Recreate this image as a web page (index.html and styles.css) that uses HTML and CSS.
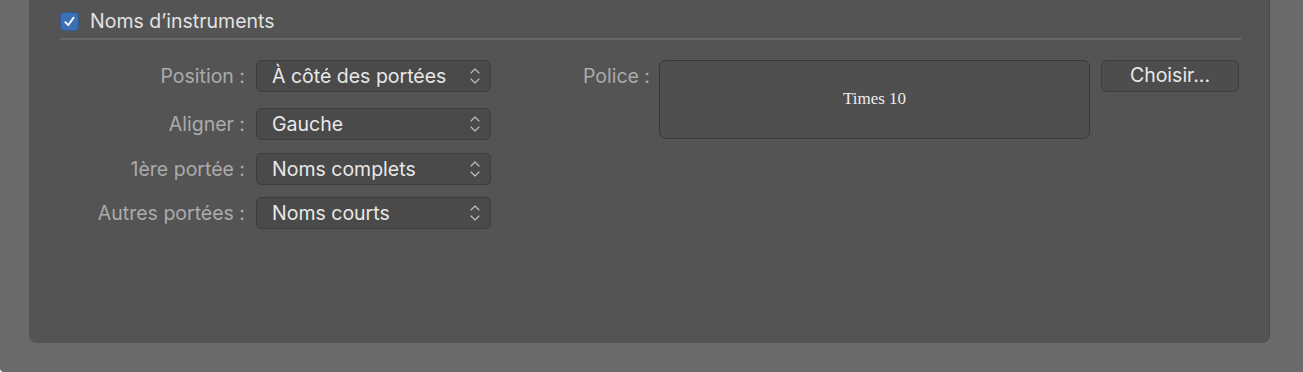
FILE: index.html
```html
<!DOCTYPE html>
<html lang="fr">
<head>
<meta charset="utf-8">
<title>Noms d'instruments</title>
<link rel="stylesheet" href="styles.css">
</head>
<body>
<div class="window">
  <div class="panel">
    <div class="header">
      <span class="checkbox">
        <svg width="13" height="13" viewBox="0 0 12 12"><path d="M2.2 6.6 L4.8 9.4 L9.8 2.4" fill="none" stroke="#fff" stroke-width="1.7" stroke-linecap="round" stroke-linejoin="round"/></svg>
      </span>
      <span class="header-title">Noms d’instruments</span>
    </div>
    <div class="separator"></div>
    <div class="content">
      <div class="form">
        <div class="row r1">
          <span class="label">Position :</span>
          <div class="popup"><span>À côté des portées</span><svg class="chev" width="10" height="18" viewBox="0 0 10 18"><path d="M1 6 L5 2 L9 6 M1 12 L5 16 L9 12" fill="none" stroke="#c2c2c2" stroke-width="1.1" stroke-linecap="round" stroke-linejoin="round"/></svg></div>
        </div>
        <div class="row r2">
          <span class="label">Aligner :</span>
          <div class="popup"><span>Gauche</span><svg class="chev" width="10" height="18" viewBox="0 0 10 18"><path d="M1 6 L5 2 L9 6 M1 12 L5 16 L9 12" fill="none" stroke="#c2c2c2" stroke-width="1.1" stroke-linecap="round" stroke-linejoin="round"/></svg></div>
        </div>
        <div class="row r3">
          <span class="label">1ère portée :</span>
          <div class="popup"><span>Noms complets</span><svg class="chev" width="10" height="18" viewBox="0 0 10 18"><path d="M1 6 L5 2 L9 6 M1 12 L5 16 L9 12" fill="none" stroke="#c2c2c2" stroke-width="1.1" stroke-linecap="round" stroke-linejoin="round"/></svg></div>
        </div>
        <div class="row">
          <span class="label">Autres portées :</span>
          <div class="popup"><span>Noms courts</span><svg class="chev" width="10" height="18" viewBox="0 0 10 18"><path d="M1 6 L5 2 L9 6 M1 12 L5 16 L9 12" fill="none" stroke="#c2c2c2" stroke-width="1.1" stroke-linecap="round" stroke-linejoin="round"/></svg></div>
        </div>
      </div>
      <div class="font-area">
        <span class="label police">Police :</span>
        <div class="font-box">Times 10</div>
        <button class="choose">Choisir...</button>
      </div>
    </div>
  </div>
</div>
</body>
</html>
```
FILE: styles.css
```css
html {
  background: #ffffff;
}
body {
  margin: 0;
  font-family: Inter, "Noto Sans", "Liberation Sans", sans-serif;
}
.window {
  height: 372px;
  background: #6a6a6a;
  border-radius: 0 0 0 4px;
  overflow: hidden;
}
.panel {
  margin-left: 29px;
  width: 1241px;
  height: 343px;
  box-sizing: border-box;
  background: #545454;
  border-right: 1px solid #4b4b4b;
  border-radius: 0 0 8px 8px;
  padding: 12px 30px 0 31px;
}
.header {
  display: flex;
  align-items: center;
  height: 18px;
}
.checkbox {
  flex: none;
  width: 19px;
  height: 19px;
  box-sizing: border-box;
  border-radius: 4px;
  background: #3c70b4;
  border: 1px solid #2f5a91;
  display: flex;
  align-items: center;
  justify-content: center;
}
.header-title {
  margin-left: 11px;
  font-size: 19.5px;
  color: #e2e2e2;
}
.separator {
  margin-top: 8px;
  height: 2px;
  background: #686868;
  width: 1181px;
}
.content {
  display: flex;
  margin-top: 20px;
}
.form {
  display: flex;
  flex-direction: column;
  gap: 12px;
}
.row {
  display: flex;
  align-items: center;
  height: 32px;
}
.r1 { margin-bottom: 4px; }
.r2 { margin-bottom: 1px; }
.label {
  font-size: 19.5px;
  color: #ababab;
}
.row .label {
  width: 185px;
  text-align: right;
  margin-right: 11px;
  white-space: nowrap;
}
.popup {
  width: 235px;
  height: 32px;
  box-sizing: border-box;
  background: #4a4a4a;
  border: 1px solid #3d3d3d;
  border-radius: 5px;
  display: flex;
  align-items: center;
  justify-content: space-between;
  padding: 0 10px 0 15px;
  font-size: 19.5px;
  color: #e8e8e8;
}
.chev {
  display: block;
}
.font-area {
  display: flex;
  align-items: flex-start;
}
.police {
  width: 159px;
  text-align: right;
  line-height: 32px;
  margin-right: 9px;
}
.font-box {
  width: 431px;
  height: 79px;
  box-sizing: border-box;
  background: #4f4f4f;
  border: 1px solid #383838;
  border-radius: 7px;
  display: flex;
  align-items: center;
  justify-content: center;
  padding-bottom: 2px;
  font-family: "Liberation Serif", serif;
  font-size: 17px;
  color: #ededed;
}
.choose {
  margin-left: 11px;
  width: 138px;
  height: 32px;
  box-sizing: border-box;
  background: #4d4d4d;
  border: 1px solid #3d3d3d;
  border-radius: 5px;
  font-family: Inter, "Noto Sans", "Liberation Sans", sans-serif;
  font-size: 19.5px;
  color: #e8e8e8;
  padding: 0 0 2px 0;
}
```
